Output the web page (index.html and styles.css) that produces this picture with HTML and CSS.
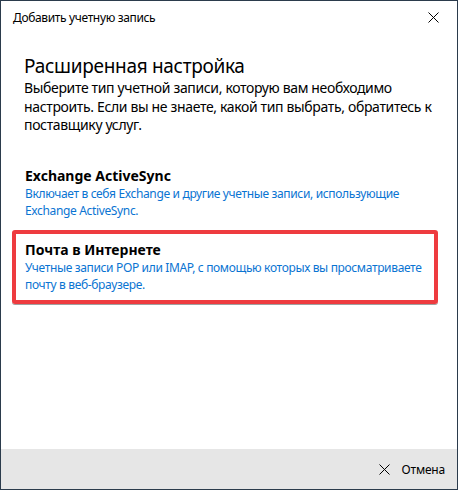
FILE: index.html
```html
<!DOCTYPE html>
<html lang="ru">
<head>
<meta charset="utf-8">
<title>Добавить учетную запись</title>
<link rel="stylesheet" href="styles.css">
</head>
<body>
<div class="window">
  <div class="titlebar">
    <span class="title">Добавить учетную запись</span>
    <svg class="close" width="11" height="11" viewBox="0 0 11 11"><path d="M0.5 0.5 L10.5 10.5 M10.5 0.5 L0.5 10.5" stroke="#000" stroke-width="1" fill="none"/></svg>
  </div>
  <div class="content">
    <h1 class="heading">Расширенная настройка</h1>
    <p class="intro">Выберите тип учетной записи, которую вам необходимо настроить. Если вы не знаете, какой тип выбрать, обратитесь к поставщику услуг.</p>
    <div class="options">
      <div class="option">
        <div class="opt-title">Exchange ActiveSync</div>
        <div class="opt-desc">Включает в себя Exchange и другие учетные записи, использующие Exchange ActiveSync.</div>
      </div>
      <div class="option selected">
        <div class="opt-title">Почта в Интернете</div>
        <div class="opt-desc">Учетные записи POP или IMAP, с помощью которых вы просматриваете почту в веб-браузере.</div>
      </div>
    </div>
  </div>
  <div class="footer">
    <button class="cancel">
      <svg width="11" height="11" viewBox="0 0 11 11"><path d="M0.5 0.5 L10.5 10.5 M10.5 0.5 L0.5 10.5" stroke="#000" stroke-width="1" fill="none"/></svg>
      <span>Отмена</span>
    </button>
  </div>
</div>
</body>
</html>
```
FILE: styles.css
```css
* { box-sizing: border-box; }
html, body { margin: 0; padding: 0; }
body {
  font-family: "Noto Sans", "Open Sans", sans-serif;
  color: #000;
  background: #fff;
}
.window {
  width: 458px;
  height: 490px;
  border: 1px solid #2b3b4c;
  display: flex;
  flex-direction: column;
  background: #fff;
}
.titlebar {
  height: 32px;
  display: flex;
  align-items: center;
  justify-content: space-between;
  padding: 1px 18px 0 12px;
}
.title {
  font-size: 12px;
  letter-spacing: -0.35px;
  color: #000;
}
.close { display: block; }
.content {
  flex: 1;
  padding: 20px 19px 0 11px;
}
.heading {
  margin: 0 0 0 12px;
  font-size: 19px;
  letter-spacing: -0.3px;
  font-weight: 400;
  line-height: 26px;
}
.intro {
  margin: 0 0 0 12px;
  font-size: 14px;
  letter-spacing: -0.35px;
  line-height: 18.5px;
  width: 415px;
}
.options {
  margin-top: 21.75px;
  display: flex;
  flex-direction: column;
}
.option {
  padding: 7px 2px 7px 9px;
  border: 4px solid transparent;
  border-radius: 3px;
}
.option.selected {
  border-color: #ee3b3f;
  box-shadow: 0 1px 0 #a0a0a0;
}
.opt-title {
  font-size: 14px;
  font-weight: 700;
  line-height: 18px;
}
.opt-desc {
  font-size: 12px;
  letter-spacing: -0.35px;
  line-height: 17px;
  color: #0a74d2;
}
.footer {
  height: 40px;
  background: #e6e6e6;
  display: flex;
  align-items: center;
  justify-content: flex-end;
  padding: 1px 12px 0 0;
}
.cancel {
  border: 0;
  background: transparent;
  display: flex;
  align-items: center;
  gap: 12px;
  padding: 0;
  font-family: inherit;
  font-size: 12px;
  letter-spacing: -0.2px;
  color: #000;
}
.cancel svg { display: block; }
```
